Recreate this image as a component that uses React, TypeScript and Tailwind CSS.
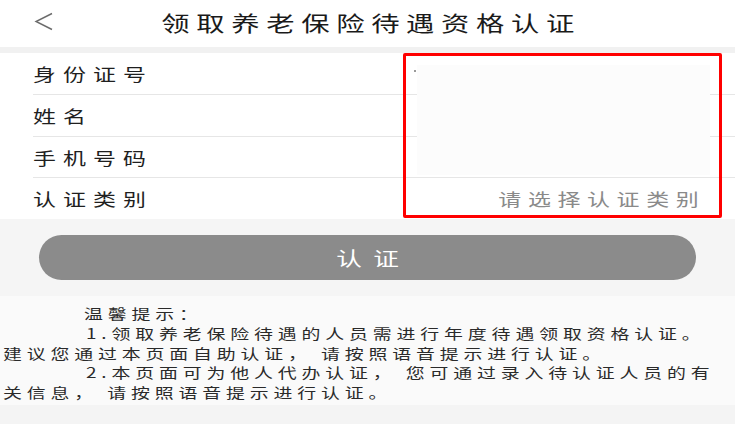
import React from "react";

const font = { fontFamily: '"Noto Sans CJK SC", "Noto Sans", sans-serif' };

function Row({ label, h, last, children }: { label: string; h: string; last?: boolean; children?: React.ReactNode }) {
  return (
    <div className={`flex items-center justify-between ml-[33px] ${h} ${last ? "" : "border-b border-[#e6e6e6]"}`}>
      <span className="inline-block origin-left scale-x-[1.35] text-[17px] tracking-[5.2px] text-[#1f1f1f] leading-none whitespace-nowrap">
        {label}
      </span>
      {children}
    </div>
  );
}

function TipLine({ pad, children }: { pad: string; children: React.ReactNode }) {
  return (
    <div className={pad}>
      <span className="inline-block origin-left scale-x-[1.35] whitespace-pre">{children}</span>
    </div>
  );
}

export default function App() {
  return (
    <div className="w-[735px] h-[424px] bg-[#f4f4f4] overflow-hidden" style={font}>
      {/* Header */}
      <div className="relative h-[47px] bg-white flex items-center justify-center">
        <div className="absolute left-[33px] top-[11px]">
          <svg width="22" height="22" viewBox="0 0 22 22" fill="none">
            <polyline points="19,2.5 3,10.5 19,18.5" stroke="#6b6b6b" strokeWidth="1.4" fill="none" />
          </svg>
        </div>
        <span className="inline-block origin-center scale-x-[1.35] text-[21px] tracking-[4.9px] pl-[4.9px] text-[#1a1a1a] leading-none pb-[3px] whitespace-nowrap">
          领取养老保险待遇资格认证
        </span>
      </div>
      <div className="h-[6px] bg-[#f1f1f1]" />

      {/* Form */}
      <div className="relative bg-white">
        <Row label="身份证号" h="h-[42px]" />
        <Row label="姓名" h="h-[42px]" />
        <Row label="手机号码" h="h-[41px]" />
        <Row label="认证类别" h="h-[41px]" last>
          <span className="inline-block origin-right scale-x-[1.35] text-[17px] tracking-[4.9px] text-[#8a8a8a] leading-none mr-[30px] whitespace-nowrap">
            请选择认证类别
          </span>
        </Row>
        {/* input area over the right side */}
        <div className="absolute left-[417px] top-[12px] w-[293px] h-[110px] bg-[#fcfcfc]" />
        <div className="absolute left-[414px] top-[17px] w-[2px] h-[2px] bg-[#9a9a9a]" />
        {/* red annotation box */}
        <div className="absolute left-[403px] top-0 w-[319px] h-[165px] border-[3px] border-[#ff0000] rounded-[2px]" />
      </div>

      {/* Button */}
      <div className="bg-[#f5f5f5] pt-[16px] pb-[16px]">
        <div className="mx-[39px] h-[45px] rounded-full bg-[#8b8b8b] flex items-center justify-center">
          <span className="inline-block origin-center scale-x-[1.35] text-[19px] tracking-[8.4px] pl-[8.4px] text-white leading-none">
            认证
          </span>
        </div>
      </div>

      {/* Tips */}
      <div className="bg-[#fafafa] pt-[8px] pb-[2px] text-[14px] tracking-[3.6px] leading-[19.75px] text-[#2a2a2a]">
        <TipLine pad="pl-[84px]">温馨提示：</TipLine>
        <TipLine pad="pl-[86px]">1.领取养老保险待遇的人员需进行年度待遇领取资格认证。</TipLine>
        <TipLine pad="pl-[3px]">建议您通过本页面自助认证， 请按照语音提示进行认证。</TipLine>
        <TipLine pad="pl-[86px]">2.本页面可为他人代办认证， 您可通过录入待认证人员的有</TipLine>
        <TipLine pad="pl-[3px]">关信息， 请按照语音提示进行认证。</TipLine>
      </div>
    </div>
  );
}
